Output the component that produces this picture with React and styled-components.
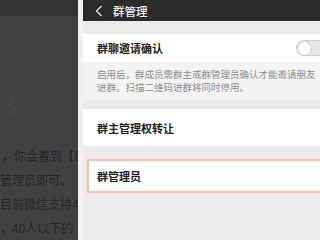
import React from "react";
import styled, { createGlobalStyle } from "styled-components";

const Global = createGlobalStyle`
	html, body {
		margin: 0;
		padding: 0;
		background: #ebebeb;
	}
	* {
		box-sizing: border-box;
	}
`;

const Screen = styled.div`
	display: flex;
	width: 320px;
	height: 240px;
	overflow: hidden;
	font-family: "Noto Sans CJK SC", "Noto Sans", sans-serif;
`;

const Article = styled.div`
	display: flex;
	flex-direction: column;
	width: 78px;
	flex-shrink: 0;
	background: #424242;
	overflow: hidden;
`;

const ArticleBar = styled.div`
	height: 20px;
	background: #343434;
`;

const ArticleBody = styled.div`
	display: flex;
	flex-direction: column;
	padding-top: 76px;
	white-space: nowrap;
`;

const StepNum = styled.div`
	font-family: "DejaVu Sans", sans-serif;
	font-weight: 200;
	font-size: 28px;
	line-height: 30px;
	color: #4b4b4b;
	margin-bottom: 22px;
`;

const ArticleLine = styled.div`
	font-size: 12px;
	line-height: 24px;
	color: #262626;
	padding-left: ${(p) => p.indent || 0}px;
`;

const Gutter = styled.div`
	width: 5px;
	flex-shrink: 0;
	background: #f1f1f1;
`;

const Phone = styled.div`
	display: flex;
	flex-direction: column;
	flex: 1;
	background: #ebebeb;
`;

const Header = styled.div`
	display: flex;
	align-items: center;
	height: 21px;
	padding-left: 12px;
	gap: 10px;
	background: #2b2b2b;
	color: #f2f2f2;
	font-size: 11.5px;
	font-weight: 500;
`;

const Back = styled.svg`
	width: 8px;
	height: 12px;
`;

const Gap = styled.div`
	height: ${(p) => p.h}px;
	background: ${(p) => p.bg || "#ebebeb"};
`;

const Row = styled.div`
	display: flex;
	align-items: center;
	justify-content: space-between;
	height: ${(p) => p.h}px;
	padding-left: 14px;
	background: #fff;
	font-size: 11px;
	font-weight: 600;
	color: #222;
	${(p) =>
		p.marked &&
		`
		margin-left: 4px;
		padding-left: 8px;
		border: 2px solid #ecc2ae;
		border-right: none;
	`}
`;

const Toggle = styled.div`
	width: 30px;
	height: 16px;
	margin-right: -6px;
	border-radius: 8px;
	border: 1.5px solid #cfcfcf;
	background: #e6e6e6;
	display: flex;
	align-items: center;
	padding-left: 1px;
`;

const Knob = styled.div`
	width: 13px;
	height: 13px;
	border-radius: 50%;
	background: #fff;
	box-shadow: 0 0 1px rgba(0, 0, 0, 0.3);
`;

const Note = styled.div`
	padding: 6px 0 6px 14px;
	font-size: 9.5px;
	line-height: 13px;
	color: #8f8f8f;
	white-space: nowrap;
	background: #f3f3f3;
`;

export default function App() {
	return (
		<Screen>
			<Global />
			<Article>
				<ArticleBar />
				<ArticleBody>
					<StepNum>3</StepNum>
					<ArticleLine indent={2}>，你会看到【群</ArticleLine>
					<ArticleLine>管理员即可。</ArticleLine>
					<ArticleLine>目前微信支持40</ArticleLine>
					<ArticleLine>，40人以下的</ArticleLine>
				</ArticleBody>
			</Article>
			<Gutter />
			<Phone>
				<Header>
					<Back viewBox="0 0 8 12">
						<path d="M6.5 1 L1.5 6 L6.5 11" fill="none" stroke="#e8e8e8" strokeWidth="1.3" />
					</Back>
					群管理
				</Header>
				<Gap h={13} />
				<Row h={28}>
					群聊邀请确认
					<Toggle>
						<Knob />
					</Toggle>
				</Row>
				<Note>
					启用后，群成员需群主或群管理员确认才能邀请朋友
					<br />
					进群。扫描二维码进群将同时停用。
				</Note>
				<Gap h={9} />
				<Row h={37}>群主管理权转让</Row>
				<Gap h={13} />
				<Row h={34} marked>
					群管理员
				</Row>
			</Phone>
		</Screen>
	);
}
